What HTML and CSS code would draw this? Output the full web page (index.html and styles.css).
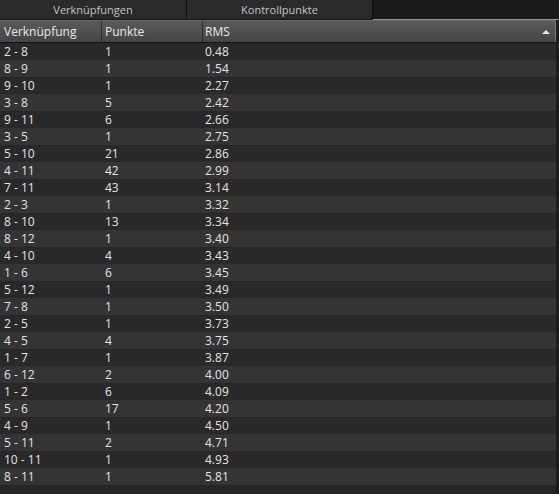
FILE: index.html
```html
<!DOCTYPE html>
<html>
<head>
<meta charset="utf-8">
<link rel="stylesheet" href="styles.css">
</head>
<body>
<div class="panel">
  <div class="tabs">
    <div class="tab tab-active">Verknüpfungen</div>
    <div class="tab">Kontrollpunkte</div>
    <div class="tab-fill"></div>
  </div>
  <div class="grid">
    <div class="head">
      <div class="hc c1">Verknüpfung</div>
      <div class="hc c2">Punkte</div>
      <div class="hc c3">RMS<span class="sort"></span></div>
    </div>
    <div class="body">
      <div class="row"><div class="c1">2 - 8</div><div class="c2">1</div><div class="c3">0.48</div></div>
      <div class="row"><div class="c1">8 - 9</div><div class="c2">1</div><div class="c3">1.54</div></div>
      <div class="row"><div class="c1">9 - 10</div><div class="c2">1</div><div class="c3">2.27</div></div>
      <div class="row"><div class="c1">3 - 8</div><div class="c2">5</div><div class="c3">2.42</div></div>
      <div class="row"><div class="c1">9 - 11</div><div class="c2">6</div><div class="c3">2.66</div></div>
      <div class="row"><div class="c1">3 - 5</div><div class="c2">1</div><div class="c3">2.75</div></div>
      <div class="row"><div class="c1">5 - 10</div><div class="c2">21</div><div class="c3">2.86</div></div>
      <div class="row"><div class="c1">4 - 11</div><div class="c2">42</div><div class="c3">2.99</div></div>
      <div class="row"><div class="c1">7 - 11</div><div class="c2">43</div><div class="c3">3.14</div></div>
      <div class="row"><div class="c1">2 - 3</div><div class="c2">1</div><div class="c3">3.32</div></div>
      <div class="row"><div class="c1">8 - 10</div><div class="c2">13</div><div class="c3">3.34</div></div>
      <div class="row"><div class="c1">8 - 12</div><div class="c2">1</div><div class="c3">3.40</div></div>
      <div class="row"><div class="c1">4 - 10</div><div class="c2">4</div><div class="c3">3.43</div></div>
      <div class="row"><div class="c1">1 - 6</div><div class="c2">6</div><div class="c3">3.45</div></div>
      <div class="row"><div class="c1">5 - 12</div><div class="c2">1</div><div class="c3">3.49</div></div>
      <div class="row"><div class="c1">7 - 8</div><div class="c2">1</div><div class="c3">3.50</div></div>
      <div class="row"><div class="c1">2 - 5</div><div class="c2">1</div><div class="c3">3.73</div></div>
      <div class="row"><div class="c1">4 - 5</div><div class="c2">4</div><div class="c3">3.75</div></div>
      <div class="row"><div class="c1">1 - 7</div><div class="c2">1</div><div class="c3">3.87</div></div>
      <div class="row"><div class="c1">6 - 12</div><div class="c2">2</div><div class="c3">4.00</div></div>
      <div class="row"><div class="c1">1 - 2</div><div class="c2">6</div><div class="c3">4.09</div></div>
      <div class="row"><div class="c1">5 - 6</div><div class="c2">17</div><div class="c3">4.20</div></div>
      <div class="row"><div class="c1">4 - 9</div><div class="c2">1</div><div class="c3">4.50</div></div>
      <div class="row"><div class="c1">5 - 11</div><div class="c2">2</div><div class="c3">4.71</div></div>
      <div class="row"><div class="c1">10 - 11</div><div class="c2">1</div><div class="c3">4.93</div></div>
      <div class="row"><div class="c1">8 - 11</div><div class="c2">1</div><div class="c3">5.81</div></div>
    </div>
  </div>
</div>
</body>
</html>
```
FILE: styles.css
```css
* { box-sizing: border-box; }
html, body { margin: 0; padding: 0; }
body {
  background: #1c1c1c;
  font-family: "Open Sans", "DejaVu Sans", sans-serif;
  font-size: 12px;
  color: #e4e4e4;
  width: 559px;
  height: 494px;
  overflow: hidden;
}
.panel {
  display: flex;
  flex-direction: column;
  height: 494px;
}
.tabs {
  display: flex;
  height: 20px;
  background: #1a1a1a;
}
.tab {
  width: 187px;
  height: 20px;
  background: #2a2a2a;
  border-right: 1px solid #121212;
  border-bottom: 1px solid #161616;
  color: #c4c4c4;
  font-size: 11px;
  line-height: 19px;
  text-align: center;
}
.tab + .tab { width: 186px; }
.tab-fill {
  flex: 1;
  border-bottom: 1px solid #8e8e8e;
  margin-bottom: 0;
}
.grid {
  flex: 1;
  width: 556px;
  background: #262626;
  display: flex;
  flex-direction: column;
}
.head {
  display: flex;
  height: 23px;
  background: linear-gradient(#5a5a5a, #454545);
  border-top: 1px solid #6a6a6a;
  border-bottom: 1px solid #141414;
  color: #e8e8e8;
}
.hc {
  line-height: 21px;
  border-right: 1px solid #2e2e2e;
}
.hc.c3 { border-right: 1px solid #777; position: relative; }
.c1 { width: 102px; padding-left: 4px; }
.c2 { width: 101px; padding-left: 3px; }
.c3 { flex: 1; padding-left: 2px; }
.sort {
  position: absolute;
  right: 5px;
  top: 9px;
  width: 0;
  height: 0;
  border-left: 4px solid transparent;
  border-right: 4px solid transparent;
  border-bottom: 4px solid #e8e8e8;
}
.row {
  display: flex;
  height: 17px;
  line-height: 17px;
  background: #292929;
}
.row:nth-child(even) { background: #343434; }
.row:nth-child(odd) { border-top: 1px solid #262626; line-height: 15px; }
.row:nth-child(odd) > div { line-height: 15px; }
```
